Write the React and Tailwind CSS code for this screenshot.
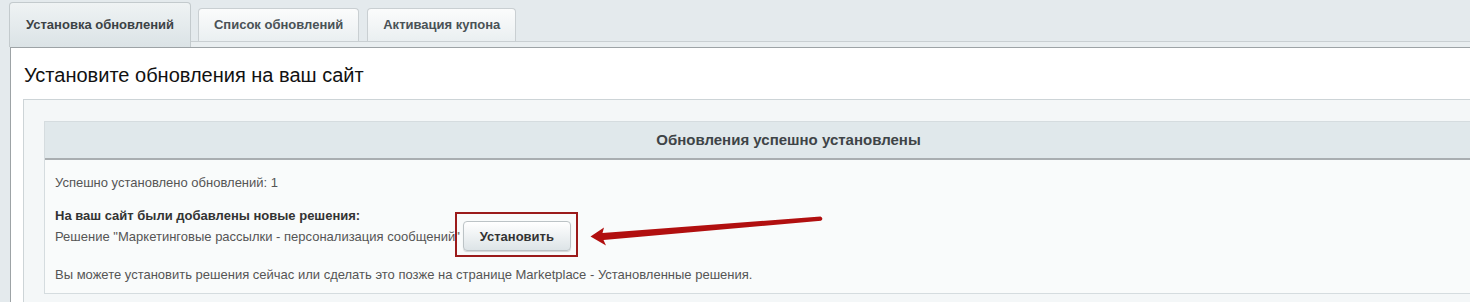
import React from "react";

const tabs = ["Список обновлений", "Активация купона"];

const Arrow = () => (
  <svg
    className="absolute left-[585px] top-[210px]"
    width="245"
    height="40"
    viewBox="585 210 245 40"
  >
    <path
      d="M590.5 236.5 L604 227.5 L602.5 233 L820.5 216.5 Q824 218.5 821 220.8 L603.5 240 L606 245.5 Z"
      fill="#b10f0f"
    />
  </svg>
);

const App = () => {
  return (
    <div
      className="relative w-[1470px] h-[302px] overflow-hidden bg-[#e4eaed] text-[13px]"
      style={{ fontFamily: '"Liberation Sans", Arial, sans-serif' }}
    >
      {/* tabs */}
      <div className="flex items-end h-[47px] pl-[9px]">
        <div className="h-[45px] px-4 flex items-center rounded-t-[4px] border border-b-0 border-[#c3cacd] bg-gradient-to-b from-[#eff3f4] to-[#dbe3e6] font-bold text-[#3b4245]">
          Установка обновлений
        </div>
        <div className="flex-1 flex flex-col">
          <div className="flex items-end gap-[8px] pl-[7px]">
            {tabs.map((t) => (
              <div
                key={t}
                className="h-[33px] px-[15px] flex items-center rounded-t-[4px] border border-b-0 border-[#c9cfd2] bg-gradient-to-b from-[#fbfcfc] to-[#eaeff1] font-bold text-[#4a5256]"
              >
                {t}
              </div>
            ))}
          </div>
          <div className="h-[6px] border-t border-[#c9cfd2] bg-[#e9eef0]"></div>
        </div>
      </div>

      {/* panel */}
      <div className="ml-[10px] border-t border-l border-[#9da3a6] bg-white">
        <div className="h-[51px] pl-[13px] pt-[15px] text-[20px] leading-[24px] text-[#111]">
          Установите обновления на ваш сайт
        </div>
        <div className="ml-[12px] h-[220px] border-t border-l border-[#cdd4d7] bg-[#f4f7f8] pt-[21px] pl-[20px]">
          <div className="w-[1489px] border border-[#d5dcdf] bg-[#f9fbfb]">
            <div className="h-[38px] flex items-center justify-center border-b-2 border-[#a9aeb1] bg-[#e0e8eb] font-bold text-[15px] text-[#3e4447]">
              Обновления успешно установлены
            </div>
            <div className="pl-[10px] pt-[15px] pb-[11px] leading-[15px] text-[#555]">
              <div>Успешно установлено обновлений: 1</div>
              <div className="mt-[18px] font-bold text-[#333]">На ваш сайт были добавлены новые решения:</div>
              <div className="-mt-[2px] flex items-center h-[30px]">
                <span>Решение "Маркетинговые рассылки - персонализация сообщений"</span>
                <div className="relative ml-[3px]">
                  <button className="h-[30px] w-[108px] rounded-[4px] border border-[#bcc3c6] bg-gradient-to-b from-[#ffffff] to-[#dde4e7] shadow-[0_1px_1px_rgba(0,0,0,0.15)] font-bold text-[#333] text-[13px]">
                    Установить
                  </button>
                  <div className="absolute -left-[8px] -top-[9px] -right-[7px] -bottom-[6px] border-2 border-[#9b1b1b]"></div>
                </div>
              </div>
              <div className="mt-[16px]">
                Вы можете установить решения сейчас или сделать это позже на странице Marketplace - Установленные решения.
              </div>
            </div>
          </div>
        </div>
      </div>

      <Arrow />
    </div>
  );
};

export default App;
